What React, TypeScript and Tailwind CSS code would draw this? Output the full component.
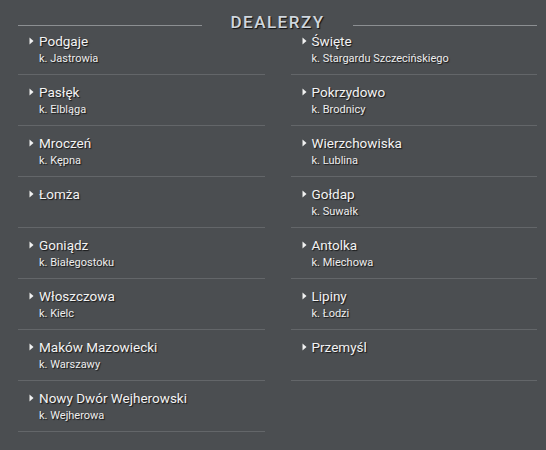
import React from "react";

type Dealer = { name: string; sub?: string };

const left: Dealer[] = [
  { name: "Podgaje", sub: "k. Jastrowia" },
  { name: "Pasłęk", sub: "k. Elbląga" },
  { name: "Mroczeń", sub: "k. Kępna" },
  { name: "Łomża" },
  { name: "Goniądz", sub: "k. Białegostoku" },
  { name: "Włoszczowa", sub: "k. Kielc" },
  { name: "Maków Mazowiecki", sub: "k. Warszawy" },
  { name: "Nowy Dwór Wejherowski", sub: "k. Wejherowa" },
];

const right: Dealer[] = [
  { name: "Święte", sub: "k. Stargardu Szczecińskiego" },
  { name: "Pokrzydowo", sub: "k. Brodnicy" },
  { name: "Wierzchowiska", sub: "k. Lublina" },
  { name: "Gołdap", sub: "k. Suwałk" },
  { name: "Antolka", sub: "k. Miechowa" },
  { name: "Lipiny", sub: "k. Łodzi" },
  { name: "Przemyśl" },
];

function Row({ d }: { d: Dealer }) {
  return (
    <div className="relative h-[51px] border-b border-[#636669] pl-[21px] pt-[9px]">
      <svg
        className="absolute left-[11px] top-[13px]"
        width="5"
        height="8"
        viewBox="0 0 5 8"
      >
        <path d="M0.5 0.5 L4.5 4 L0.5 7.5 Z" fill="#f2f2f2" />
      </svg>
      <div className="text-[13.5px] leading-[16px] text-[#f3f3f3] [text-shadow:1px_1px_1px_rgba(0,0,0,0.7)]">
        {d.name}
      </div>
      {d.sub && (
        <div className="mt-[3px] text-[11px] leading-[14px] text-[#eeeeee] [text-shadow:1px_1px_1px_rgba(0,0,0,0.7)]">
          {d.sub}
        </div>
      )}
    </div>
  );
}

export default function App() {
  return (
    <div
      className="w-[546px] h-[450px] bg-[#4b4e51] pl-[18px] pr-[9px] overflow-hidden"
      style={{ fontFamily: "Roboto, 'Noto Sans', sans-serif" }}
    >
      <div className="mt-[13px] flex h-[22px] items-center gap-[28px]">
        <div className="h-px flex-1 translate-y-[1px] bg-[#8c8f92]" />
        <div className="text-[17px] font-medium tracking-[1.5px] text-[#cfd6dd] [text-shadow:1px_1px_1px_rgba(0,0,0,0.8)] -translate-y-[1px]">
          DEALERZY
        </div>
        <div className="h-px flex-1 translate-y-[1px] bg-[#8c8f92]" />
      </div>
      <div className="-mt-[11px] grid grid-cols-2 gap-x-[26px]">
        <div>
          {left.map((d) => (
            <Row key={d.name} d={d} />
          ))}
        </div>
        <div>
          {right.map((d) => (
            <Row key={d.name} d={d} />
          ))}
        </div>
      </div>
    </div>
  );
}
